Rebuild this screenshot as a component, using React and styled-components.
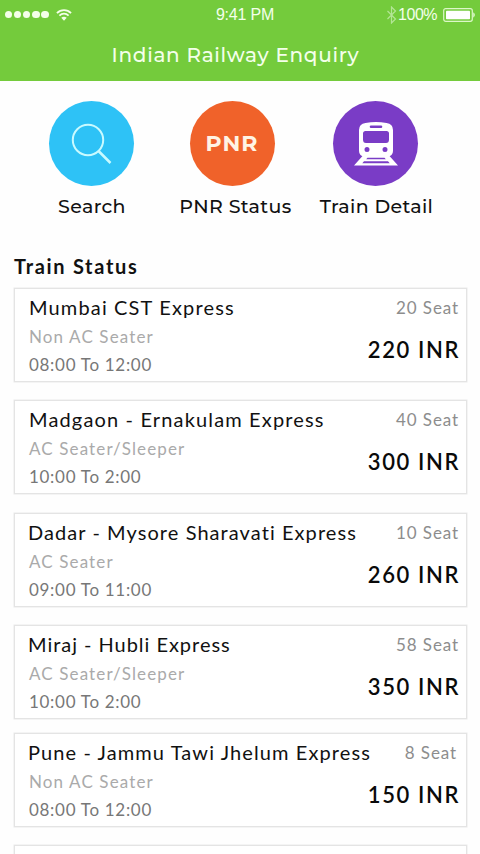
import React from "react";
import styled, { createGlobalStyle } from "styled-components";

const GlobalStyle = createGlobalStyle`
  * { box-sizing: border-box; }
  html, body { margin: 0; background: #fefefe; }
  body { height: 854px; overflow: hidden; }
`;

const Screen = styled.main`
  width: 480px;
  height: 854px;
  overflow: hidden;
  background: #fefefe;
  font-family: Lato, "Open Sans", sans-serif;
  color: #111;
`;

const Header = styled.header`
  height: 81px;
  background: #74cb3c;
  color: #f3ffea;
`;

const StatusBar = styled.div`
  display: grid;
  grid-template-columns: 1fr auto 1fr;
  align-items: center;
  height: 28px;
  padding: 0 4px 0 5px;
  font: 400 16px/28px "Liberation Sans", sans-serif;
`;

const Signal = styled.div`
  display: flex;
  align-items: center;
  gap: 7px;
`;

const Dots = styled.div`
  display: flex;
  gap: 1.8px;
`;

const Dot = styled.span`
  width: 7.3px;
  height: 7.3px;
  border-radius: 50%;
  background: #f4ffe9;
`;

const Clock = styled.time`
  letter-spacing: -0.2px;
  padding: 1px 0 0 9px;
`;

const Power = styled.div`
  display: flex;
  align-items: center;
  justify-content: flex-end;
`;

const Charge = styled.span`
  margin: 1px 6px 0 1px;
  letter-spacing: -0.5px;
`;

const Title = styled.h1`
  margin: 13px 0 0;
  text-align: center;
  font: 500 20px/28px Montserrat, Inter, sans-serif;
  letter-spacing: 0.7px;
  padding-right: 9px;
`;

const Actions = styled.nav`
  display: grid;
  grid-template-columns: 140px 141px 146px;
  padding: 20px 0 0 21.5px;
`;

const Action = styled.a`
  display: flex;
  flex-direction: column;
  align-items: center;
  color: #111;
`;

const Disc = styled.span`
  display: flex;
  align-items: center;
  justify-content: center;
  width: 85px;
  height: 85px;
  border-radius: 50%;
  background: ${(p) => p.$color};
  color: #fff3e4;
  font: 700 22px/1 Montserrat, Inter, sans-serif;
  letter-spacing: 1px;
  padding-top: 1px;
`;

const ActionLabel = styled.span`
  margin-top: 7px;
  padding-left: ${(p) => p.$shift}px;
  font: 500 19px/28px Montserrat, Inter, sans-serif;
  letter-spacing: 0.35px;
  white-space: nowrap;
`;

const SectionTitle = styled.h2`
  margin: 31px 0 0 14px;
  font-size: 20px;
  line-height: 28px;
  font-weight: 700;
  letter-spacing: 1.7px;
`;

const TrainList = styled.section`
  display: flex;
  flex-direction: column;
  margin: 8px 13px 0 14px;
`;

const TrainCard = styled.article`
  display: flex;
  flex: none;
  height: 94px;
  margin-bottom: ${(p) => p.$gap}px;
  padding: 4px 7px 0 14px;
  border: 1px solid #e4e4e4;
  box-shadow: 0 0 0 0.5px #e9e9e9;
  background: #fff;
  white-space: nowrap;
`;

const Details = styled.div`
  display: flex;
  flex-direction: column;
  flex: 1;
  min-width: 0;
`;

const TrainName = styled.h3`
  margin: 0 0 0 ${(p) => p.$shift}px;
  font-size: 20px;
  line-height: 28px;
  font-weight: 400;
  letter-spacing: ${(p) => p.$spacing}px;
`;

const Coach = styled.span`
  padding-top: 2px;
  font-size: 17px;
  line-height: 27px;
  letter-spacing: 1.12px;
  color: #aaa;
`;

const Time = styled.span`
  padding-top: 1px;
  font-size: 17px;
  line-height: 27px;
  letter-spacing: 0.7px;
  color: #777;
`;

const Fare = styled.div`
  display: flex;
  flex-direction: column;
  align-items: flex-end;
`;

const Seats = styled.span`
  font-size: 17px;
  line-height: 29px;
  letter-spacing: 0.9px;
  margin-right: ${(p) => p.$inset}px;
  color: #8d8d8d;
`;

const Price = styled.strong`
  font-size: 22px;
  line-height: 30px;
  margin-top: 13px;
  margin-right: -1px;
  letter-spacing: 1.6px;
  font-weight: 600;
  color: #0a0a0a;
`;

const WifiIcon = () => (
  <svg width="16" height="14" viewBox="0 0 17 14" fill="none" stroke="#f4ffe9" strokeWidth="1.9">
    <path d="M1 5C5.2 .7 11.8 .7 16 5M3.6 7.7c2.8-2.8 7-2.8 9.8 0" />
    <path d="M5.6 10c1.8-1.5 4-1.5 5.8 0L8.5 13z" fill="#f4ffe9" stroke="none" />
  </svg>
);

const BluetoothIcon = () => (
  <svg width="11" height="18" viewBox="0 0 11 18" fill="none" stroke="#b3e596" strokeWidth="1.2">
    <path d="M1.5 5l8 8L5.500 17V1l4 4-8 8" />
  </svg>
);

const BatteryIcon = () => (
  <svg width="33" height="14" viewBox="0 0 33 14">
    <rect x=".7" y=".7" width="28.6" height="12.6" rx="2" fill="none" stroke="#dcf7c8" strokeWidth="1.2" />
    <rect x="3" y="2.8" width="24" height="8.4" rx=".8" fill="#fff" />
    <path d="M30.3 4.3q3 2.7 0 5.4z" fill="#eaffdc" />
  </svg>
);

const SearchIcon = () => (
  <svg width="41" height="42" viewBox="0 0 41 42" fill="none" stroke="#c9faff" strokeWidth="2">
    <circle cx="17" cy="17" r="15.2" />
    <path d="M27.500 28L39.500 40" strokeWidth="2.5" />
  </svg>
);

const TrainIcon = () => (
  <svg width="44" height="44" viewBox="0 0 44 44">
    <path
      fill="#fff"
      fillRule="evenodd"
      d="M11.500 1Q22-1 32.500 1Q39 2 39 8v21q0 5-6 6H11q-6-1-6-6V8q0-6 6.500-7zM17 3.500a1.300 1.300 0 0 0 0 2.600h10a1.300 1.300 0 0 0 0-2.600zM11.500 9Q9 9 9 11.500v6Q9 21 12 21h20q3 0 3-3.500v-6Q35 9 32.500 9zM13 25a2.500 2.500 0 1 0 0 5 2.500 2.500 0 0 0 0-5zm18 0a2.500 2.500 0 1 0 0 5 2.500 2.500 0 0 0 0-5z"
    />
    <path
      fill="#fff"
      fillRule="evenodd"
      d="M8.500 34h27L44 43.500H0zM13.500 35.700l-1.300 1.500h19.600l-1.300-1.500zM10 39.300l-1.700 2h27.400l-1.700-2z"
    />
  </svg>
);

const actions = [
  { label: "Search", color: "#2ec2f6", icon: <SearchIcon />, shift: 1 },
  { label: "PNR Status", color: "#f0622a", icon: "PNR", shift: 7 },
  { label: "Train Detail", color: "#7a3cc6", icon: <TrainIcon />, shift: 2 },
];

const trains = [
  { name: "Mumbai CST Express", spacing: 1.15, coach: "Non AC Seater", time: "08:00 To 12:00", seats: 20, price: 220, gap: 18 },
  { name: "Madgaon - Ernakulam Express", spacing: 1.15, coach: "AC Seater/Sleeper", time: "10:00 To 2:00", seats: 40, price: 300, gap: 19 },
  { name: "Dadar - Mysore Sharavati Express", spacing: 1.07, coach: "AC Seater", time: "09:00 To 11:00", seats: 10, price: 260, gap: 18, shift: -1 },
  { name: "Miraj - Hubli Express", spacing: 0.97, coach: "AC Seater/Sleeper", time: "10:00 To 2:00", seats: 58, price: 350, gap: 14, shift: -1 },
  { name: "Pune - Jammu Tawi Jhelum Express", spacing: 1.1, coach: "Non AC Seater", time: "08:00 To 12:00", seats: 8, price: 150, gap: 18, shift: -1, seatInset: 2 },
];

export default function App() {
  return (
    <Screen>
      <GlobalStyle />
      <Header>
        <StatusBar>
          <Signal>
            <Dots>{[0, 1, 2, 3, 4].map((n) => <Dot key={n} />)}</Dots>
            <WifiIcon />
          </Signal>
          <Clock>9:41 PM</Clock>
          <Power>
            <BluetoothIcon />
            <Charge>100%</Charge>
            <BatteryIcon />
          </Power>
        </StatusBar>
        <Title>Indian Railway Enquiry</Title>
      </Header>
      <Actions>
        {actions.map((a) => (
          <Action key={a.label}>
            <Disc $color={a.color}>{a.icon}</Disc>
            <ActionLabel $shift={a.shift}>{a.label}</ActionLabel>
          </Action>
        ))}
      </Actions>
      <SectionTitle>Train Status</SectionTitle>
      <TrainList>
        {trains.map((t) => (
          <TrainCard key={t.name} $gap={t.gap}>
            <Details>
              <TrainName $spacing={t.spacing} $shift={t.shift || 0}>{t.name}</TrainName>
              <Coach>{t.coach}</Coach>
              <Time>{t.time}</Time>
            </Details>
            <Fare>
              <Seats $inset={t.seatInset || 0}>{t.seats} Seat</Seats>
              <Price>{t.price} INR</Price>
            </Fare>
          </TrainCard>
        ))}
        <TrainCard $gap={0} />
      </TrainList>
    </Screen>
  );
}
